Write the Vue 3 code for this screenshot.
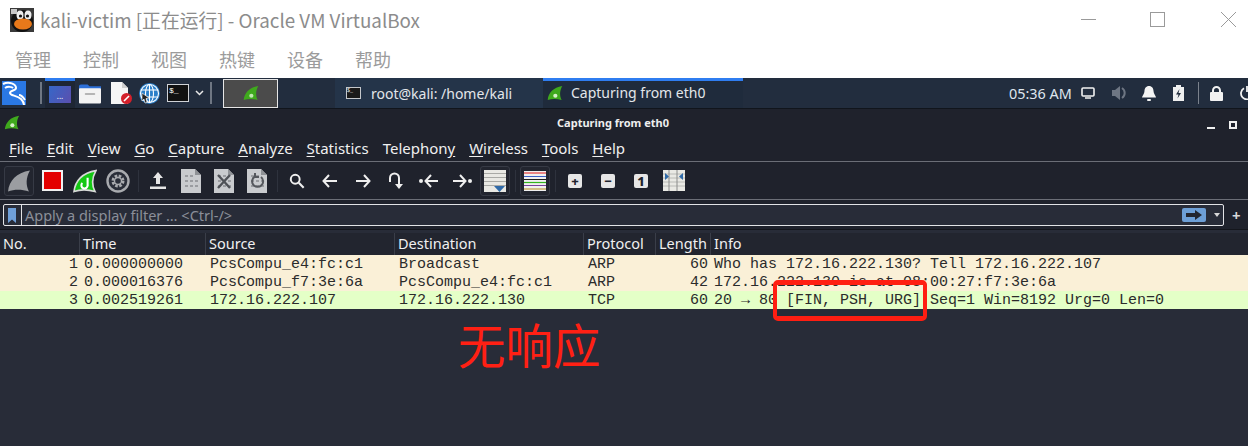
<script setup>
const menus = ['管理', '控制', '视图', '热键', '设备', '帮助']
const wsMenus = [
  ['F', 'ile'], ['E', 'dit'], ['V', 'iew'], ['G', 'o'], ['C', 'apture'], ['A', 'nalyze'],
  ['S', 'tatistics'], ['Telephon', 'y'], ['W', 'ireless'], ['T', 'ools'], ['H', 'elp']
]
const columns = ['No.', 'Time', 'Source', 'Destination', 'Protocol', 'Length', 'Info']
const packets = [
  { no: 1, time: '0.000000000', src: 'PcsCompu_e4:fc:c1', dst: 'Broadcast', proto: 'ARP', len: 60, info: 'Who has 172.16.222.130? Tell 172.16.222.107', cls: 'arp' },
  { no: 2, time: '0.000016376', src: 'PcsCompu_f7:3e:6a', dst: 'PcsCompu_e4:fc:c1', proto: 'ARP', len: 42, info: '172.16.222.130 is at 08:00:27:f7:3e:6a', cls: 'arp' },
  { no: 3, time: '0.002519261', src: '172.16.222.107', dst: '172.16.222.130', proto: 'TCP', len: 60, info: '20 → 80 [FIN, PSH, URG] Seq=1 Win=8192 Urg=0 Len=0', cls: 'tcp' }
]
const fin = 'M1 21 C2 11 9 3 22 1 C18 8 18 15 21 21 C14 19 7 19 1 21 Z'
</script>

<template>
  <div class="screen">
    <header class="vbox-title">
      <svg class="vbox-icon" width="24" height="24" viewBox="0 0 24 24">
        <rect width="24" height="24" fill="#3a3a3a" />
        <ellipse cx="12" cy="13" rx="11" ry="11" fill="#111" />
        <ellipse cx="10" cy="7" rx="3.5" ry="4.5" fill="#eee" />
        <ellipse cx="18" cy="7" rx="3.5" ry="4.5" fill="#eee" />
        <circle cx="10.500" cy="8" r="1.600" fill="#111" />
        <circle cx="17.500" cy="8" r="1.600" fill="#111" />
        <ellipse cx="13" cy="16" rx="9" ry="5.500" fill="#e8791a" />
        <rect x="1" y="1" width="6" height="5" fill="#c8c8c8" />
      </svg>
      <span class="vbox-text">kali-victim [正在运行] - Oracle VM VirtualBox</span>
      <div class="win-controls">
        <svg width="15" height="15" viewBox="0 0 15 15"><path d="M0 7.500H15" stroke="#9a9a9a" fill="none" /></svg>
        <svg width="15" height="15" viewBox="0 0 15 15"><rect x=".5" y=".5" width="14" height="14" stroke="#9a9a9a" fill="none" /></svg>
        <svg class="win-close" width="15" height="15" viewBox="0 0 15 15"><path d="M0 0L15 15M15 0L0 15" stroke="#9a9a9a" fill="none" /></svg>
      </div>
    </header>
    <nav class="vbox-menu">
      <span v-for="m in menus" :key="m">{{ m }}</span>
    </nav>

    <div class="panel">
      <svg class="kali-logo" width="24" height="24" viewBox="0 0 24 24">
        <rect width="24" height="24" fill="#2a78e4" />
        <path d="M1 3C7 0 14 3 14 7C14 10 8 9 8 12C8 15 15 14 19 18C21 20 22 22 22 24M3 7C6 5 10 6 11 7M17 14C19 14 21 16 23 19" stroke="#fff" stroke-width="2" fill="none" />
      </svg>
      <i class="panel-sep first"></i>
      <div class="workspace"><div class="ws-thumb">...</div></div>
      <svg class="launcher folder" width="22" height="21" viewBox="0 0 23 21">
        <path d="M0 3a2 2 0 0 1 2-2h7l2 2h12v4H0z" fill="#2c6fd8" />
        <rect y="5" width="23" height="16" rx="1" fill="#f3f3f3" />
        <rect x="6" y="10" width="11" height="2" rx="1" fill="#b5b5b5" />
      </svg>
      <svg class="launcher doc" width="22" height="23" viewBox="0 0 22 23">
        <path d="M0 0h11l6 6v16H0z" fill="#f5f5f5" />
        <path d="M11 0l6 6h-6z" fill="#cfcfcf" />
        <circle cx="15.500" cy="16.500" r="5.500" fill="#d3202a" />
        <path d="M13 19l5-5" stroke="#fff" stroke-width="1.600" />
      </svg>
      <svg class="launcher globe" width="21" height="21" viewBox="0 0 21 21">
        <circle cx="10.500" cy="10.500" r="10.500" fill="#2a7fc9" />
        <g stroke="#fff" stroke-width="1.100" fill="none">
          <circle cx="10.500" cy="10.500" r="9" />
          <ellipse cx="10.500" cy="10.500" rx="4" ry="9" />
          <path d="M2 7h17M2 14h17M10.500 1v19" />
        </g>
        <path d="M3 10l7 5-3 .5 1 4-2 .5-1-4-2 2z" fill="#222" stroke="#fff" stroke-width=".6" />
      </svg>
      <div class="term-icon"><span>$_</span></div>
      <svg class="chev" width="9" height="6" viewBox="0 0 9 6"><path d="M1 1l3.500 3.500L8 1" stroke="#e8e8e8" stroke-width="1.500" fill="none" /></svg>
      <i class="panel-sep second"></i>
      <div class="win-thumb">
        <svg width="16" height="16" viewBox="0 0 23 22"><path :d="fin" fill="#3fa91d" /><circle cx="12" cy="15" r="3" fill="#bfe8b0" /></svg>
      </div>
      <div class="task term-task">
        <div class="mini-term"><span>$_</span></div>
        <span>root@kali: /home/kali</span>
      </div>
      <div class="task ws-task">
        <svg width="16" height="16" viewBox="0 0 23 22"><path :d="fin" fill="#3fa91d" /><circle cx="12" cy="15" r="3" fill="#d6f2c9" /></svg>
        <span>Capturing from eth0</span>
      </div>
      <div class="tray">
        <span class="clock">05:36 AM</span>
        <svg width="14" height="12" viewBox="0 0 14 12"><rect x="1" y="1" width="12" height="8" rx="1" fill="none" stroke="#f2f2f2" stroke-width="1.600" /><path d="M4 11h6" stroke="#f2f2f2" stroke-width="1.500" /></svg>
        <svg class="t-vol" width="15" height="14" viewBox="0 0 15 14"><path d="M0 4h3l5-4v14l-5-4H0z" fill="#6e7683" /><path d="M10 2a6 6 0 0 1 0 10" stroke="#6e7683" stroke-width="2" fill="none" /></svg>
        <svg class="t-bell" width="14" height="15" viewBox="0 0 14 15"><path d="M7 0c3 0 4.500 2.500 4.500 5 0 3 2.500 5 2.500 6.500H0C0 10 2.500 8 2.500 5 2.500 2.500 4 0 7 0z" fill="#f4f4f4" /><rect x="5" y="13" width="4" height="2" rx="1" fill="#f4f4f4" /></svg>
        <svg class="t-bat" width="11" height="16" viewBox="0 0 11 16"><path d="M3 0h5v2h3v14H0V2h3z" fill="#efefef" /><path d="M6.500 4L3 9.500h2.500L4.500 13.500 8 8H5.500z" fill="#222c3c" /></svg>
        <i class="tray-sep"></i>
        <svg class="t-lock" width="13" height="15" viewBox="0 0 13 15"><path d="M3 7V4.500a3.500 3.500 0 0 1 7 0V7" stroke="#f2f2f2" stroke-width="2" fill="none" /><rect y="6" width="13" height="9" rx="1" fill="#f2f2f2" /></svg>
        <svg class="t-power" width="14" height="14" viewBox="0 0 14 14"><path d="M4 2.200a6 6 0 1 0 6 0M7 0v6" stroke="#f2f2f2" stroke-width="1.800" fill="none" /></svg>
      </div>
    </div>

    <div class="ws-title">
      <svg class="ws-logo" width="16" height="15" viewBox="0 0 23 22"><path :d="fin" fill="#3fa91d" /><circle cx="12" cy="15" r="3" fill="#d6f2c9" /></svg>
      <strong>Capturing from eth0</strong>
      <div class="ws-winbtn"><i class="ws-min"></i><i class="ws-max"></i></div>
    </div>

    <nav class="ws-menu">
      <span v-for="m in wsMenus" :key="m[1]"><u v-if="m[0].length === 1">{{ m[0] }}</u><template v-else>{{ m[0] }}</template><u v-if="m[0].length > 1">{{ m[1] }}</u><template v-else>{{ m[1] }}</template></span>
    </nav>

    <div class="toolbar">
      <div class="tool tool-box">
        <svg width="24" height="24" viewBox="0 0 23 22"><path :d="fin" fill="#9b9da1" /></svg>
      </div>
      <div class="tool stop"><i></i></div>
      <div class="tool">
        <svg width="24" height="24" viewBox="0 0 23 22"><path :d="fin" fill="#14c814" stroke="#d8dad8" stroke-width="1.600" /><path d="M14 8v7a3 3 0 1 1-5-2" stroke="#fff" stroke-width="2" fill="none" /></svg>
      </div>
      <div class="tool">
        <svg width="24" height="24" viewBox="0 0 24 24"><circle cx="12" cy="12" r="10.500" fill="#2a2e39" stroke="#a9abaf" stroke-width="2.400" /><circle cx="12" cy="12" r="5.200" fill="none" stroke="#a9abaf" stroke-width="2.600" stroke-dasharray="2.600 1.500" /><circle cx="12" cy="12" r="3.500" fill="none" stroke="#a9abaf" stroke-width="1.400" /></svg>
      </div>
      <i class="tsep"></i>
      <div class="tool">
        <svg width="16" height="17" viewBox="0 0 16 17"><path d="M8 0L13 6H10V12H6V6H3Z" fill="#e6e6e6" /><rect y="14.500" width="16" height="2.500" fill="#e6e6e6" /></svg>
      </div>
      <div class="tool" v-for="k in ['doc', 'close', 'reload']" :key="k">
        <svg width="22" height="24" viewBox="0 0 22 24">
          <path d="M1 0h14l6 6v18H1z" fill="#c9cbce" />
          <path d="M15 0l6 6h-6z" fill="#8f9296" />
          <g fill="#9a9ca0"><rect x="5" y="6" width="3" height="2" /><rect x="10" y="6" width="3" height="2" /><rect x="5" y="11" width="3" height="2" /><rect x="10" y="11" width="3" height="2" /><rect x="15" y="11" width="3" height="2" /><rect x="5" y="16" width="3" height="2" /><rect x="10" y="16" width="3" height="2" /><rect x="15" y="16" width="3" height="2" /></g>
          <path v-if="k === 'close'" d="M5 6L17 19M17 6L5 19" stroke="#4f5257" stroke-width="2.400" />
          <path v-if="k === 'reload'" d="M15 8a5.500 5.500 0 1 1-6-.5M9 4v4h4" stroke="#55585d" stroke-width="2" fill="none" />
        </svg>
      </div>
      <i class="tsep"></i>
      <div class="tool">
        <svg width="16" height="16" viewBox="0 0 18 18"><circle cx="7" cy="7" r="5" fill="none" stroke="#efefef" stroke-width="2.200" /><path d="M11 11l5.500 5.500" stroke="#efefef" stroke-width="2.400" /></svg>
      </div>
      <div class="tool"><svg width="16" height="14" viewBox="0 0 16 14"><path d="M7 1L1.500 7 7 13M2 7H15" stroke="#efefef" stroke-width="2" fill="none" /></svg></div>
      <div class="tool"><svg width="16" height="14" viewBox="0 0 16 14"><path d="M9 1l5.500 6L9 13M14 7H1" stroke="#efefef" stroke-width="2" fill="none" /></svg></div>
      <div class="tool"><svg width="16" height="18" viewBox="0 0 16 18"><path d="M2 10V6a4.500 4.500 0 0 1 9 0v8" stroke="#efefef" stroke-width="2" fill="none" /><path d="M7 12l4 5 4-5z" fill="#efefef" /></svg></div>
      <div class="tool"><svg width="20" height="14" viewBox="0 0 20 14"><circle cx="2" cy="7" r="2" fill="#efefef" /><path d="M12 1L6.500 7 12 13M7 7H19" stroke="#efefef" stroke-width="2" fill="none" /></svg></div>
      <div class="tool"><svg width="20" height="14" viewBox="0 0 20 14"><circle cx="18" cy="7" r="2" fill="#efefef" /><path d="M8 1l5.500 6L8 13M13 7H1" stroke="#efefef" stroke-width="2" fill="none" /></svg></div>
      <div class="tool tool-box">
        <svg width="22" height="22" viewBox="0 0 22 22"><rect width="22" height="22" fill="#e9e9e4" /><path d="M0 3.500h22M0 7.500h22M0 11.500h22M0 15.500h22" stroke="#a9aaa6" /><path d="M10 16h11l-5.500 6z" fill="#2f6aa8" /></svg>
      </div>
      <i class="tsep"></i>
      <div class="tool tool-box">
        <svg width="22" height="20" viewBox="0 0 22 20"><rect width="22" height="20" fill="#f0f0f0" /><path d="M0 2h22" stroke="#e31b1b" /><path d="M0 5.500h22" stroke="#3a5fc8" /><path d="M0 8.500h22" stroke="#1f1f1f" /><path d="M0 11.500h22" stroke="#33b51d" stroke-width="1.200" /><path d="M0 14.500h22" stroke="#7a3f9c" /><path d="M0 18h22" stroke="#b58a18" /></svg>
      </div>
      <i class="tsep"></i>
      <div class="tool"><div class="zoom-key">+</div></div>
      <div class="tool"><div class="zoom-key">−</div></div>
      <div class="tool"><div class="zoom-key">1</div></div>
      <div class="tool">
        <svg width="22" height="21" viewBox="0 0 22 21"><rect width="22" height="21" fill="#e9e9e4" /><path d="M0 4h22M0 8h22M0 12h22M0 16h22" stroke="#b9bab6" /><path d="M6 0v21M14 0v21" stroke="#8b8c8b" /><path d="M2 3l4 3.500L2 10zM20 3l-4 3.500 4 3.500z" fill="#2f6aa8" /></svg>
      </div>
    </div>

    <div class="filter-row">
      <div class="filter">
        <svg class="bookmark" width="8" height="15" viewBox="0 0 8 15"><path d="M0 0h8v15L4 11.500 0 15z" fill="#6f9fd8" /></svg>
        <span class="filter-hint">Apply a display filter … &lt;Ctrl-/&gt;</span>
        <div class="apply">
          <svg width="16" height="10" viewBox="0 0 16 10"><path d="M0 3h9V0l7 5-7 5V7H0z" fill="#22252e" /></svg>
        </div>
        <i class="drop"></i>
      </div>
      <span class="plus">+</span>
    </div>

    <div class="packet-header">
      <div v-for="c in columns" :key="c" class="hcell">{{ c }}</div>
    </div>
    <div class="packets">
      <div v-for="p in packets" :key="p.no" class="packet" :class="p.cls">
        <span class="no">{{ p.no }}</span>
        <span class="time">{{ p.time }}</span>
        <span class="src">{{ p.src }}</span>
        <span class="dst">{{ p.dst }}</span>
        <span class="proto">{{ p.proto }}</span>
        <span class="len">{{ p.len }}</span>
        <span class="info">{{ p.info }}</span>
      </div>
    </div>

    <div class="mark-box"></div>
    <div class="mark-text">无响应</div>
  </div>
</template>

<style>
html, body { margin: 0; background: #282c38; }
</style>

<style scoped>
.screen {
  position: relative;
  width: 1248px;
  height: 446px;
  overflow: hidden;
  background: #282c38;
  font-family: "Noto Sans", "Noto Sans CJK SC", sans-serif;
}
.vbox-title {
  height: 40px;
  background: #fff;
  display: flex;
  align-items: center;
  padding-left: 10px;
  box-sizing: border-box;
}
.vbox-icon { flex: none; }
.vbox-text {
  margin: -2px 0 0 6px;
  font-size: 18.800px;
  color: #8c8c8c;
  font-family: "Noto Sans CJK SC", "Noto Sans", sans-serif;
  white-space: nowrap;
}
.win-controls {
  margin-left: auto;
  margin-right: 12px;
  display: flex;
  gap: 54px;
  margin-top: -1px;
}
.win-close { margin-left: 2px; }
.vbox-menu {
  height: 38px;
  background: #fff;
  display: flex;
  gap: 32px;
  padding-left: 15px;
  font-size: 18px;
  line-height: 38px;
  color: #9b9b9b;
  font-family: "Noto Sans CJK SC", sans-serif;
}
.panel {
  height: 30px;
  background: #222d3e;
  border-bottom: 1px solid #11151c;
  display: flex;
  align-items: center;
  color: #e3e6ea;
  font-size: 14px;
  position: relative;
}
.kali-logo { margin-left: 2px; flex: none; }
.panel-sep { width: 2px; height: 22px; background: #6f7783; flex: none; }
.panel-sep.first { margin-left: 14px; }
.panel-sep.second { margin-left: 6px; }
.workspace {
  margin-left: 3px;
  width: 30px;
  height: 30px;
  background: #1e2634;
  border-top: 3px solid #2f7df0;
  box-sizing: border-box;
  display: flex;
  align-items: center;
  justify-content: center;
}
.ws-thumb {
  width: 22px;
  height: 17px;
  background: linear-gradient(120deg, #3667c8, #5b4fae);
  font-size: 8px;
  line-height: 20px;
  text-align: center;
  color: #fff;
}
.launcher { flex: none; }
.folder { margin-left: 4px; }
.doc { margin-left: 10px; }
.globe { margin-left: 6px; }
.term-icon {
  margin-left: 7px;
  width: 19px;
  height: 16px;
  border: 1px solid #cfd2d6;
  background: #111;
  font-family: "Liberation Mono", monospace;
  font-size: 8px;
  line-height: 11px;
  padding-left: 1px;
  flex: none;
  color: #fff;
}
.chev { margin-left: 6px; flex: none; }
.win-thumb {
  margin-left: 11px;
  width: 55px;
  height: 29px;
  box-sizing: border-box;
  border: 1px solid #e6e6e6;
  background: #4b4b4b;
  display: flex;
  align-items: center;
  justify-content: center;
}
.task {
  height: 30px;
  box-sizing: border-box;
  display: flex;
  align-items: center;
  white-space: nowrap;
}
.term-task {
  margin-left: 57px;
  width: 208px;
  padding-left: 11px;
  gap: 10px;
  background: #243449;
}
.mini-term {
  width: 13px;
  height: 10px;
  background: #1a1a1a;
  border: 1px solid #c4c7cb;
  font-size: 5px;
  line-height: 7px;
  font-family: "Liberation Mono", monospace;
  color: #fff;
}
.ws-task {
  width: 200px;
  padding: 0 0 3px 4px;
  gap: 8px;
  background: #1f2b3c;
  border-top: 3px solid #2f7df0;
}
.ws-task span { margin-top: -1px; }
.tray {
  margin-left: auto;
  display: flex;
  align-items: center;
  width: 239px;
  flex: none;
  overflow: hidden;
}
.clock { font-size: 14.400px; color: #dfe6ee; white-space: nowrap; }
.tray svg { flex: none; }
.tray .clock + svg { margin-left: 9px; }
.t-vol { margin-left: 17px; }
.t-bell { margin-left: 15px; }
.t-bat { margin-left: 17px; }
.tray-sep { width: 1px; height: 22px; background: #7b828d; margin-left: 14px; flex: none; }
.t-lock { margin-left: 11px; }
.t-power { margin-left: 17px; }

.ws-title {
  height: 26px;
  background: #1f222c;
  display: flex;
  align-items: center;
  position: relative;
  justify-content: center;
  padding-right: 22px;
  color: #eeeeee;
  font-size: 11px;
}
.ws-title strong { font-weight: 700; }
.ws-logo { position: absolute; left: 4px; top: 6px; }
.ws-winbtn { position: absolute; left: 1207px; top: 12px; display: flex; gap: 14px; align-items: flex-end; height: 8px; }
.ws-min { width: 8px; height: 2px; background: #f0f0f0; }
.ws-max { width: 8px; height: 8px; box-sizing: border-box; border: 2px solid #f0f0f0; }
.ws-menu {
  height: 26px;
  background: #1f222c;
  display: flex;
  gap: 13.900px;
  padding-left: 9px;
  color: #f0f0f0;
  font-size: 15px;
  line-height: 27px;
  border-bottom: 1px solid #6b6e77;
}
.ws-menu u { text-underline-offset: 2px; }
.toolbar {
  height: 38px;
  box-sizing: border-box;
  background: #1f222c;
  display: flex;
  align-items: center;
  border-bottom: 1px solid #6b6e77;
  padding-left: 2.500px;
}
.tool {
  width: 33px;
  height: 30px;
  flex: none;
  display: flex;
  align-items: center;
  justify-content: center;
  box-sizing: border-box;
}
.tool-box {
  border: 1px solid #363a45;
  border-radius: 3px;
  background: #22252f;
  width: 30px;
  margin: 0 1.500px;
}
.stop i {
  display: block;
  width: 21px;
  height: 21px;
  background: #e30000;
  border: 2px solid #f1f1f1;
  box-sizing: border-box;
}
.tsep { width: 1px; height: 22px; background: #2e323d; margin: 0 3px; flex: none; }
.zoom-key {
  width: 14px;
  height: 14px;
  background: #e6e6e6;
  border-radius: 2px;
  color: #1f222c;
  font-size: 13px;
  line-height: 14px;
  font-weight: 800;
  text-align: center;
}
.filter-row {
  height: 30px;
  background: #1f222c;
  display: flex;
  align-items: center;
  border-bottom: 1px solid #14161c;
  position: relative;
  padding: 1px 0 0 3px;
  box-sizing: border-box;
}
.filter {
  width: 1221px;
  height: 22px;
  box-sizing: border-box;
  background: #282c38;
  border: 1px solid #e2e3e6;
  border-radius: 2px;
  display: flex;
  align-items: center;
  padding-left: 4px;
}
.bookmark { flex: none; margin-right: 5px; }
.filter-hint {
  border-left: 1px solid #e2e3e6;
  height: 20px;
  line-height: 21px;
  padding-left: 3px;
  font-size: 14.500px;
  color: #8b8f99;
  white-space: nowrap;
}
.apply {
  margin-left: auto;
  width: 24px;
  height: 14px;
  border-radius: 2px;
  background: #6d9fd6;
  display: flex;
  align-items: center;
  justify-content: center;
}
.drop {
  margin: 0 3px 0 8px;
  width: 0;
  height: 0;
  border-left: 3.500px solid transparent;
  border-right: 3.500px solid transparent;
  border-top: 4px solid #d8d8d8;
}
.plus { margin-left: 8px; font-size: 15px; font-weight: 700; color: #d8d8d8; }
.packet-header, .packet {
  display: grid;
  grid-template-columns: 79px 126px 189px 189px 72px 55px 1fr;
}
.packet-header {
  margin-top: 3px;
  height: 22px;
  background: #22252f;
  font-size: 14.500px;
  line-height: 20px;
  color: #f0f0f0;
}
.hcell {
  padding-left: 3px;
  border-left: 1px solid #3a3e49;
  white-space: nowrap;
}
.hcell:first-child { border-left: 0; }
.packets { font-family: "Liberation Mono", monospace; font-size: 15px; line-height: 20px; color: #2b2b2b; }
.packet { height: 18px; white-space: pre; }
.packet.arp { background: #faf0d7; }
.packet.tcp { background: #e4ffc7; }
.packet span { padding-left: 5px; }
.packet .no { padding: 0 1px 0 0; text-align: right; }
.packet .len { padding: 0 2px 0 0; text-align: right; }
.packet .info { padding-left: 4px; }
.mark-box {
  position: absolute;
  left: 773px;
  top: 280px;
  width: 154px;
  height: 41px;
  box-sizing: border-box;
  border-style: solid;
  border-width: 5px 4px;
  border-color: #ff1e12;
  border-radius: 5px;
}
.mark-text {
  position: absolute;
  left: 458px;
  top: 310px;
  font-family: "Noto Sans CJK SC", sans-serif;
  font-size: 47.500px;
  font-weight: 400;
  line-height: 68px;
  color: #ff2014;
  white-space: nowrap;
}
</style>
